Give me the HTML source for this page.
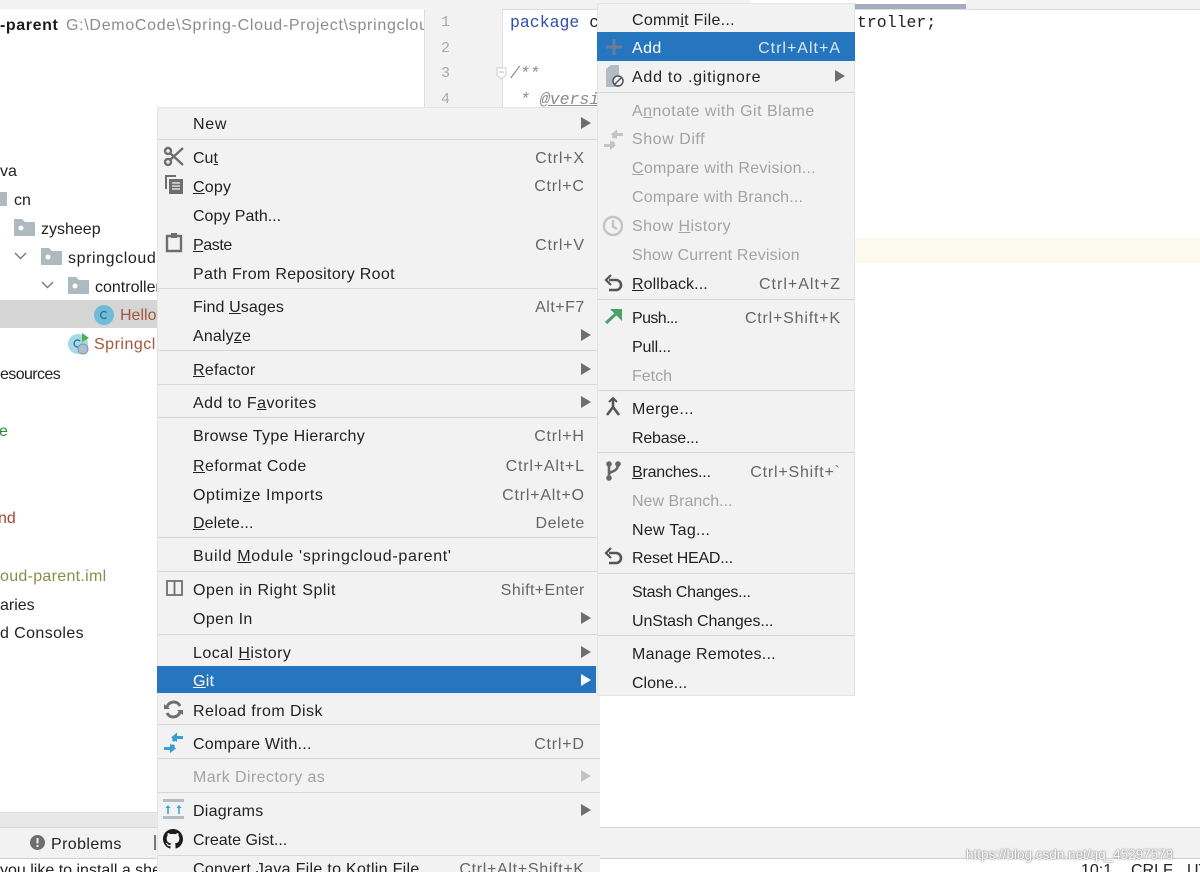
<!DOCTYPE html>
<html><head><meta charset="utf-8"><style>
html,body{margin:0;padding:0;width:1200px;height:872px;overflow:hidden;background:#fff}
body{position:relative;font-family:"Liberation Sans","Noto Sans CJK SC",sans-serif;font-size:16px;color:#222}
div,span.t{position:absolute}
.t{white-space:nowrap;line-height:20px;height:20px;margin-top:2px}
.m{background:#f2f2f2}
.s{height:1px;background:#d6d6d6}
.d{color:#a3a3a3}
.k{color:#666;letter-spacing:.8px;margin-right:-.8px}
.w{color:#fff}
.a{width:0;height:0;border-left:10px solid #6e6e6e;border-top:6px solid transparent;border-bottom:6px solid transparent;left:581px}
.r{left:632px}.l{left:193px}
.c{font-family:"Liberation Mono",monospace;font-size:16.5px;margin-top:1px}
.n{font-family:"Liberation Mono",monospace;font-size:15px;color:#aaa;left:441px;margin-top:1px}
svg{position:absolute;overflow:visible}
</style></head><body>
<!-- background -->
<div style="left:0;top:0;width:424px;height:9px;background:#f2f2f2"></div>
<div style="left:424px;top:0;width:776px;height:9px;background:#f2f2f2;border-bottom:1px solid #ddd"></div>
<div style="left:750px;top:0;width:216px;height:4px;background:#fff"></div>
<div style="left:750px;top:4px;width:216px;height:5px;background:#a3adbd"></div>
<div style="left:424px;top:9px;width:77px;height:100px;background:#f2f2f2;border-left:1px solid #ddd;border-right:1px solid #e2e2e2"></div>
<div style="left:855px;top:238px;width:345px;height:25px;background:#fcfaed"></div>
<div class="t" style="left:0;top:14px;font-weight:bold;color:#1c1c1c;letter-spacing:.6px">-parent</div>
<div class="t" style="left:66px;top:14px;width:358px;overflow:hidden;color:#8c8c8c;letter-spacing:.7px">G:\DemoCode\Spring-Cloud-Project\springcloud-parent</div>
<div class="t n" style="top:12px">1</div><div class="t n" style="top:38px">2</div><div class="t n" style="top:63px">3</div><div class="t n" style="top:89px">4</div>
<div class="t c" style="left:510px;top:12px;color:#2f4fb0">package <span style="color:#222">c</span></div>
<div class="t c" style="left:857px;top:12px;color:#222">troller;</div>
<div class="t c" style="left:510px;top:63px;color:#8c8c8c;font-style:italic">/**</div>
<div class="t c" style="left:520px;top:89px;color:#8c8c8c;font-style:italic">* <u>@versi</u></div>
<svg style="left:496px;top:67px" width="12" height="14"><path d="M1 1H10V8L5.5 12L1 8Z" fill="#fff" stroke="#ccc"/><path d="M3 5H8" stroke="#bbb"/></svg>
<!-- tree -->
<div style="left:0;top:300px;width:157px;height:28px;background:#d5d5d5"></div>
<div class="t" style="left:0;top:160px">va</div>
<div style="left:0;top:192px;width:7px;height:14px;background:#aeb9c0"></div>
<div class="t" style="left:14px;top:189px">cn</div>
<svg style="left:14px;top:219px" width="21" height="17"><path d="M0 0H8L11 3H21V17H0Z" fill="#aeb9c0"/><circle cx="7" cy="9" r="2.500" fill="#fff"/></svg>
<div class="t" style="left:41px;top:218px">zysheep</div>
<svg style="left:14px;top:252px" width="13" height="8"><path d="M1 1L6.500 6.500L12 1" fill="none" stroke="#777" stroke-width="1.400"/></svg>
<svg style="left:41px;top:248px" width="21" height="17"><path d="M0 0H8L11 3H21V17H0Z" fill="#aeb9c0"/><circle cx="7" cy="9" r="2.500" fill="#fff"/></svg>
<div class="t" style="left:68px;top:247px;width:89px;overflow:hidden;letter-spacing:.6px">springcloud</div>
<svg style="left:41px;top:281px" width="13" height="8"><path d="M1 1L6.500 6.500L12 1" fill="none" stroke="#777" stroke-width="1.400"/></svg>
<svg style="left:68px;top:277px" width="21" height="17"><path d="M0 0H8L11 3H21V17H0Z" fill="#aeb9c0"/><circle cx="7" cy="9" r="2.500" fill="#fff"/></svg>
<div class="t" style="left:95px;top:276px;width:62px;overflow:hidden">controller</div>
<svg style="left:94px;top:305px" width="20" height="20"><circle cx="10" cy="10" r="10" fill="#6fbcd9"/><path d="M12.500 7.500A3.500 3.500 0 1 0 12.500 12.500" fill="none" stroke="#2f6f8f" stroke-width="1.300"/></svg>
<div class="t" style="left:120px;top:304px;width:37px;overflow:hidden;color:#a5553a">Hello</div>
<svg style="left:68px;top:333px" width="22" height="22"><circle cx="10" cy="11" r="10" fill="#a6d8ea"/><path d="M12 8A3.500 3.500 0 1 0 12 13" fill="none" stroke="#2f6f8f" stroke-width="1.300"/><path d="M14 0L21 5L14 9Z" fill="#4caf50"/><circle cx="15" cy="16" r="5" fill="#aebfcc" stroke="#7f97a8"/></svg>
<div class="t" style="left:94px;top:333px;width:63px;overflow:hidden;color:#a5553a;letter-spacing:.5px">Springcl</div>
<div class="t" style="left:0;top:363px;letter-spacing:-.6px">esources</div>
<div class="t" style="left:-1px;top:420px;color:#2e8b3d">e</div>
<div class="t" style="left:-2px;top:507px;color:#a5452a">nd</div>
<div class="t" style="left:0;top:565px;color:#8b8b4e;letter-spacing:.3px">oud-parent.iml</div>
<div class="t" style="left:0;top:594px">aries</div>
<div class="t" style="left:0;top:622px;letter-spacing:.4px">d Consoles</div>
<!-- bottom -->
<div style="left:0;top:812px;width:157px;height:15px;background:#e8e8e8;border-top:1px solid #ddd;box-sizing:border-box"></div>
<div style="left:0;top:827px;width:1200px;height:32px;background:#f2f2f2;border-top:1px solid #d6d6d6;border-bottom:1px solid #d0d0d0;box-sizing:border-box"></div>
<svg style="left:30px;top:835px" width="15" height="15"><circle cx="7.500" cy="7.500" r="7.500" fill="#6e6e6e"/><path d="M7.500 3V8.500M7.500 10V12" stroke="#f2f2f2" stroke-width="2"/></svg>
<div class="t" style="left:51px;top:833px;letter-spacing:.4px">Problems</div>
<div style="left:154px;top:835px;width:2px;height:15px;background:#777"></div>
<div class="t" style="left:0;top:859px;width:157px;overflow:hidden">you like to install a shell</div>
<div class="t" style="left:1081px;top:859px">10:1</div>
<div class="t" style="left:1131px;top:859px">CRLF</div>
<div class="t" style="left:1187px;top:859px">UTF</div>
<!-- left menu -->
<div class="m" style="left:157px;top:107px;width:443px;height:765px;border-left:1px solid #e4e4e4;border-top:1px solid #e4e4e4;box-sizing:border-box"></div>
<div class="s" style="left:158px;top:139px;width:442px"></div>
<div class="s" style="left:158px;top:288px;width:442px"></div>
<div class="s" style="left:158px;top:350px;width:442px"></div>
<div class="s" style="left:158px;top:384px;width:442px"></div>
<div class="s" style="left:158px;top:417px;width:442px"></div>
<div class="s" style="left:158px;top:537px;width:442px"></div>
<div class="s" style="left:158px;top:571px;width:442px"></div>
<div class="s" style="left:158px;top:634px;width:442px"></div>
<div class="s" style="left:158px;top:724px;width:442px"></div>
<div class="s" style="left:158px;top:758px;width:442px"></div>
<div class="s" style="left:158px;top:792px;width:442px"></div>
<div class="s" style="left:158px;top:855px;width:442px"></div>
<div style="left:157px;top:666px;width:439px;height:27px;background:#2675bf"></div>
<div class="t l" style="top:113px;letter-spacing:.7px">New</div>
<div class="t l" style="top:147px">Cu<u>t</u></div><div class="t k" style="right:616px;top:147px">Ctrl+X</div>
<div class="t l" style="top:176px;letter-spacing:.2px"><u>C</u>opy</div><div class="t k" style="right:616px;top:175px">Ctrl+C</div>
<div class="t l" style="top:205px">Copy Path...</div>
<div class="t l" style="top:234px;letter-spacing:-.4px"><u>P</u>aste</div><div class="t k" style="right:616px;top:234px">Ctrl+V</div>
<div class="t l" style="top:263px;letter-spacing:.32px">Path From Repository Root</div>
<div class="t l" style="top:296px;letter-spacing:.1px">Find <u>U</u>sages</div><div class="t k" style="right:616px;top:296px;letter-spacing:.5px">Alt+F7</div>
<div class="t l" style="top:325px;letter-spacing:.15px">Analy<u>z</u>e</div>
<div class="t l" style="top:359px;letter-spacing:.25px"><u>R</u>efactor</div>
<div class="t l" style="top:392px;letter-spacing:.45px">Add to F<u>a</u>vorites</div>
<div class="t l" style="top:425px;letter-spacing:.33px">Browse Type Hierarchy</div><div class="t k" style="right:616px;top:425px">Ctrl+H</div>
<div class="t l" style="top:455px;letter-spacing:.4px"><u>R</u>eformat Code</div><div class="t k" style="right:616px;top:455px">Ctrl+Alt+L</div>
<div class="t l" style="top:484px;letter-spacing:.6px">Optimi<u>z</u>e Imports</div><div class="t k" style="right:616px;top:484px">Ctrl+Alt+O</div>
<div class="t l" style="top:512px;letter-spacing:.1px"><u>D</u>elete...</div><div class="t k" style="right:616px;top:512px;letter-spacing:.5px">Delete</div>
<div class="t l" style="top:545px;letter-spacing:.7px">Build <u>M</u>odule 'springcloud-parent'</div>
<div class="t l" style="top:579px;letter-spacing:.5px">Open in Right Split</div><div class="t k" style="right:616px;top:579px;letter-spacing:.4px">Shift+Enter</div>
<div class="t l" style="top:608px;letter-spacing:.4px">Open In</div>
<div class="t l" style="top:642px;letter-spacing:.45px">Local <u>H</u>istory</div>
<div class="t l w" style="top:670px;letter-spacing:.3px"><u>G</u>it</div>
<div class="t l" style="top:700px;letter-spacing:.45px">Reload from Disk</div>
<div class="t l" style="top:733px;letter-spacing:.2px">Compare With...</div><div class="t k" style="right:616px;top:733px">Ctrl+D</div>
<div class="t l d" style="top:766px;letter-spacing:.4px">Mark Directory as</div>
<div class="t l" style="top:800px;letter-spacing:.25px">Diagrams</div>
<div class="t l" style="top:829px">Create Gist...</div>
<div class="t l" style="top:858px;letter-spacing:.3px">Convert Java File to Kotlin File</div><div class="t k" style="right:616px;top:858px;letter-spacing:.7px">Ctrl+Alt+Shift+K</div>
<div class="a" style="top:117px"></div>
<div class="a" style="top:329px"></div>
<div class="a" style="top:363px"></div>
<div class="a" style="top:396px"></div>
<div class="a" style="top:612px"></div>
<div class="a" style="top:646px"></div>
<div class="a" style="top:674px;border-left-color:#fff"></div>
<div class="a" style="top:770px;border-left-color:#c4c4c4"></div>
<div class="a" style="top:804px"></div>
<!-- left icons -->
<svg style="left:164px;top:147px" width="20" height="19" fill="none" stroke="#6e6e6e" stroke-width="2.400"><circle cx="4" cy="4" r="3"/><circle cx="4" cy="15" r="3"/><path d="M6 6L19 18M6 13L19 1"/></svg>
<svg style="left:165px;top:175px" width="18" height="19"><path d="M0 0H11V2H2V14H0Z" fill="#6e6e6e"/><path d="M4 4H18V19H4Z" fill="#6e6e6e"/><path d="M7 8H15M7 11H15M7 14H15" stroke="#f2f2f2" stroke-width="1.200"/></svg>
<svg style="left:166px;top:233px" width="16" height="19"><path d="M1 3H15V18H1Z" fill="none" stroke="#6e6e6e" stroke-width="2.400"/><path d="M5 0H11V5H5Z" fill="#6e6e6e"/></svg>
<svg style="left:166px;top:580px" width="17" height="16" fill="none" stroke="#6e6e6e" stroke-width="1.800"><path d="M1 1H16V15H1ZM8.500 1V15"/></svg>
<svg style="left:164px;top:701px" width="19" height="17" fill="none" stroke="#6e6e6e" stroke-width="3"><path d="M16 5A7 7 0 0 0 3 6M3 12A7 7 0 0 0 16 11"/><path d="M0 3L6 8H0ZM19 14L13 9H19Z" fill="#6e6e6e" stroke="none"/></svg>
<svg style="left:163px;top:732px" width="21" height="21" fill="none" stroke="#389fd6" stroke-width="3"><path d="M1 16.500H8L11 13"/><path d="M20 5.500H13L10 9"/><path d="M7 11.500L13 16.500L7 21Z" fill="#389fd6" stroke="none"/><path d="M14 0.500L8 5.500L14 10Z" fill="#389fd6" stroke="none"/></svg>
<svg style="left:163px;top:799px" width="21" height="20"><path d="M0 0H21V3H0ZM0 17H21V20H0Z" fill="#b5bdc4"/><path d="M5 15V7M16 15V7" stroke="#389fd6" stroke-width="1.500"/><path d="M2.500 9L5 6L7.500 9ZM13.500 9L16 6L18.500 9Z" fill="#389fd6"/></svg>
<svg style="left:163px;top:829px" width="20" height="20" viewBox="0 0 16 16"><path fill="#1b1b1b" d="M8 0C3.580 0 0 3.580 0 8c0 3.540 2.290 6.530 5.470 7.590.4.070.55-.17.550-.38 0-.19-.01-.82-.01-1.490-2.010.37-2.530-.49-2.690-.94-.09-.23-.48-.94-.82-1.130-.28-.15-.68-.52-.01-.53.630-.01 1.080.58 1.230.82.720 1.210 1.870.87 2.330.66.070-.52.280-.87.510-1.070-1.780-.2-3.640-.89-3.640-3.950 0-.87.310-1.590.820-2.150-.08-.2-.36-1.020.08-2.120 0 0 .67-.21 2.200.82.640-.18 1.320-.27 2-.27s1.360.09 2 .27c1.530-1.040 2.200-.82 2.200-.82.440 1.100.16 1.920.08 2.120.51.560.820 1.270.820 2.150 0 3.070-1.870 3.750-3.650 3.950.29.250.54.730.54 1.480 0 1.070-.01 1.930-.01 2.200 0 .21.150.46.550.38A8.010 8.010 0 0 0 16 8c0-4.420-3.580-8-8-8z"/></svg>
<!-- right menu -->
<div class="m" style="left:597px;top:3px;width:258px;height:693px;border:1px solid #e4e4e4;box-sizing:border-box"></div>
<div class="s" style="left:598px;top:92px;width:256px"></div>
<div class="s" style="left:598px;top:299px;width:256px"></div>
<div class="s" style="left:598px;top:390px;width:256px"></div>
<div class="s" style="left:598px;top:452px;width:256px"></div>
<div class="s" style="left:598px;top:573px;width:256px"></div>
<div class="s" style="left:598px;top:635px;width:256px"></div>
<div style="left:597px;top:32px;width:258px;height:29px;background:#2675bf"></div>
<div class="t r" style="top:9px;letter-spacing:.3px">Comm<u>i</u>t File...</div>
<div class="t r w" style="top:37px;letter-spacing:.4px">Add</div><div class="t k" style="right:360px;top:37px;color:#dce8f5;letter-spacing:1px;margin-right:-1px">Ctrl+Alt+A</div>
<div class="t r" style="top:66px;letter-spacing:.75px">Add to .gitignore</div>
<div class="t r d" style="top:100px;letter-spacing:.48px">A<u>n</u>notate with Git Blame</div>
<div class="t r d" style="top:128px;letter-spacing:.55px">Show Diff</div>
<div class="t r d" style="top:157px;letter-spacing:.25px"><u>C</u>ompare with Revision...</div>
<div class="t r d" style="top:186px;letter-spacing:.18px">Compare with Branch...</div>
<div class="t r d" style="top:215px;letter-spacing:.4px">Show <u>H</u>istory</div>
<div class="t r d" style="top:244px;letter-spacing:.2px">Show Current Revision</div>
<div class="t r" style="top:273px;letter-spacing:.1px"><u>R</u>ollback...</div><div class="t k" style="right:360px;top:273px;letter-spacing:1px;margin-right:-1px">Ctrl+Alt+Z</div>
<div class="t r" style="top:307px;letter-spacing:-.6px">Push...</div><div class="t k" style="right:360px;top:307px">Ctrl+Shift+K</div>
<div class="t r" style="top:336px;letter-spacing:-.15px">Pull...</div>
<div class="t r d" style="top:365px">Fetch</div>
<div class="t r" style="top:398px;letter-spacing:.4px">Merge...</div>
<div class="t r" style="top:427px;letter-spacing:-.2px">Rebase...</div>
<div class="t r" style="top:461px;letter-spacing:-.2px"><u>B</u>ranches...</div><div class="t k" style="right:360px;top:461px">Ctrl+Shift+`</div>
<div class="t r d" style="top:490px">New Branch...</div>
<div class="t r" style="top:519px;letter-spacing:.3px">New Tag...</div>
<div class="t r" style="top:547px;letter-spacing:-.25px">Reset HEAD...</div>
<div class="t r" style="top:581px;letter-spacing:-.25px">Stash Changes...</div>
<div class="t r" style="top:610px;letter-spacing:-.1px">UnStash Changes...</div>
<div class="t r" style="top:643px;letter-spacing:.25px">Manage Remotes...</div>
<div class="t r" style="top:672px">Clone...</div>
<div class="a" style="left:835px;top:70px"></div>
<!-- right icons -->
<svg style="left:606px;top:39px" width="16" height="16"><path d="M6.500 0H9.500V6.500H16V9.500H9.500V16H6.500V9.500H0V6.500H6.500Z" fill="#6a7d92"/></svg>
<svg style="left:606px;top:65px" width="18" height="22"><path d="M0 4L5 0H13V22H0Z" fill="#b0bbc3"/><circle cx="12" cy="16" r="5" fill="#f2f2f2" stroke="#555" stroke-width="1.500"/><path d="M9 19L15 13" stroke="#555" stroke-width="1.500"/></svg>
<svg style="left:603px;top:129px" width="21" height="21" fill="none" stroke="#c4c4c4" stroke-width="3"><path d="M1 16.500H8L11 13"/><path d="M20 5.500H13L10 9"/><path d="M7 11.500L13 16.500L7 21Z" fill="#c4c4c4" stroke="none"/><path d="M14 0.500L8 5.500L14 10Z" fill="#c4c4c4" stroke="none"/></svg>
<svg style="left:603px;top:216px" width="20" height="20" fill="none" stroke="#c4c4c4" stroke-width="2.400"><circle cx="10" cy="10" r="9"/><path d="M10 4V10.500L14 13"/></svg>
<svg style="left:605px;top:275px" width="18" height="17" fill="none" stroke="#555" stroke-width="2.600"><path d="M4 5H11A5 5 0 0 1 11 15H4"/><path d="M6 0L1 5L6 10" stroke-width="2.200"/></svg>
<svg style="left:605px;top:308px" width="17" height="17"><path d="M1 15L14 3" stroke="#4ba068" stroke-width="3"/><path d="M5 1H17V13Z" fill="#4ba068"/></svg>
<svg style="left:605px;top:398px" width="16" height="20" fill="none" stroke="#555" stroke-width="2.600"><path d="M8 1V9L2 17M8 9L14 17"/><path d="M4 4L8 0L12 4" stroke-width="2"/></svg>
<svg style="left:606px;top:461px" width="15" height="20" fill="none" stroke="#666" stroke-width="2.600"><path d="M3 3V17M3 12C8 10 12 9 12 3"/><circle cx="3" cy="3" r="1.500" fill="#666"/><circle cx="12" cy="3" r="1.500" fill="#666"/><circle cx="3" cy="17" r="1.500" fill="#666"/></svg>
<svg style="left:605px;top:548px" width="18" height="17" fill="none" stroke="#555" stroke-width="2.600"><path d="M4 5H11A5 5 0 0 1 11 15H4"/><path d="M6 0L1 5L6 10" stroke-width="2.200"/></svg>
<!-- watermark -->
<div class="t" style="left:966px;top:843px;font-size:13.500px;color:#fff;text-shadow:0 0 2px #777,0 0 1px #888">https://blog.csdn.net/qq_45297578</div>
</body></html>
